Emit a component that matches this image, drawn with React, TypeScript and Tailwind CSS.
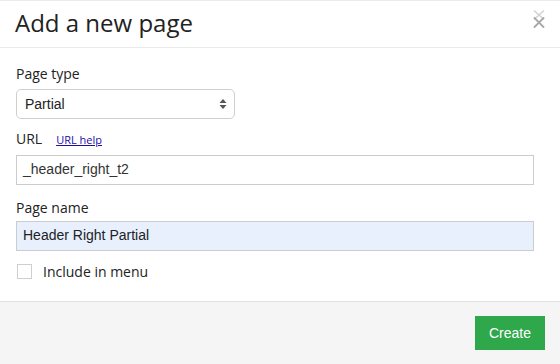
import React from 'react';

const CloseIcon = () => (
  <svg width="12" height="18" viewBox="0 0 12 18" fill="none">
    <path d="M1.5 1l9 8M10.5 1l-9 8" stroke="#d2d2d2" strokeWidth="1.6" strokeLinecap="round" />
    <path d="M1.5 8l9 9M10.5 8l-9 9" stroke="#a8a8a8" strokeWidth="1.8" strokeLinecap="round" />
  </svg>
);

const SelectArrows = () => (
  <svg width="8" height="12" viewBox="0 0 8 12">
    <path d="M4 1L7.5 5H0.5z" fill="#555" />
    <path d="M4 11L7.5 7H0.5z" fill="#555" />
  </svg>
);

export default function App() {
  return (
    <div className="w-[560px] h-[364px] bg-white flex flex-col border-t border-[#ececec] font-['Open_Sans',sans-serif] text-[#222]">
      <div className="h-[47px] shrink-0 border-b border-[#eaeaea] flex items-center justify-between pl-[15px] pr-[15px]">
        <h1 className="text-[24px] leading-none font-normal text-[#222] -mt-[2px]">Add a new page</h1>
        <div className="-mt-[10px]">
          <CloseIcon />
        </div>
      </div>

      <div className="flex-1 px-[16px] pt-[17px]">
        <label className="block text-[14px] leading-[18px] text-[#222]">Page type</label>
        <div className="mt-[6px] w-[219px] h-[30px] border border-[#cfcfcf] rounded-[5px] flex items-center justify-between pl-[8px] pr-[7px] font-['Liberation_Sans',sans-serif] text-[14px] text-[#222]">
          <span>Partial</span>
          <SelectArrows />
        </div>

        <div className="mt-[11px] flex items-baseline">
          <label className="text-[14px] leading-[18px] text-[#222]">URL</label>
          <a className="ml-[14px] text-[11px] text-[#1a0dab] underline font-['Open_Sans',sans-serif]">URL help</a>
        </div>
        <div className="mt-[6px] w-[518px] h-[30px] border border-[#cccccc] flex items-center pl-[6px] font-['Liberation_Sans',sans-serif] text-[14px] text-[#333]">
          _header_right_t2
        </div>

        <label className="block mt-[14px] text-[14px] leading-[18px] text-[#222]">Page name</label>
        <div className="mt-[4px] w-[518px] h-[30px] border border-[#cccccc] bg-[#e8f0fe] flex items-center pl-[6px] font-['Liberation_Sans',sans-serif] text-[14px] text-[#222]">
          Header Right Partial
        </div>

        <div className="mt-[12px] flex items-center">
          <span className="ml-[1px] w-[15px] h-[15px] border border-[#cfcfcf] bg-white"></span>
          <span className="ml-[11px] text-[14px] leading-[18px] text-[#222]">Include in menu</span>
        </div>
      </div>

      <div className="h-[63px] shrink-0 border-t border-[#e2e2e2] bg-[#f5f5f5] flex items-start justify-end pt-[14px] pr-[15px]">
        <button className="w-[70px] h-[34px] bg-[#2ea84a] text-white text-[14px] font-['Liberation_Sans',sans-serif]">
          Create
        </button>
      </div>
    </div>
  );
}
